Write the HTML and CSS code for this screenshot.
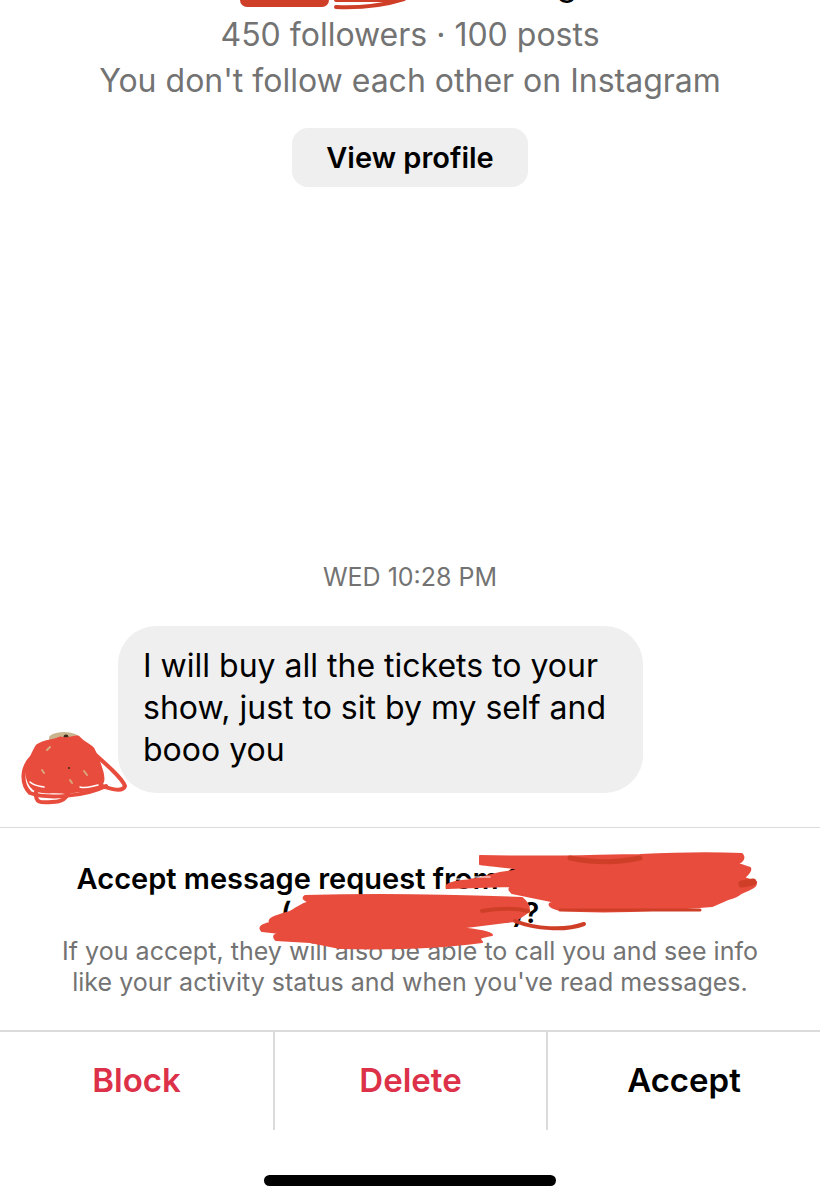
FILE: index.html
```html
<!DOCTYPE html>
<html lang="en">
<head>
    <meta charset="UTF-8">
    <meta name="viewport" content="width=device-width, initial-scale=1.0">
    <title>Message request</title>
    <link rel="stylesheet" href="styles.css">
</head>
<body>
    <div class="screen">
        <!-- profile summary, name line is cut off by the top edge -->
        <div class="profile">
            <div class="nameline">on Instagram</div>
            <div class="meta stats">450 followers · 100 posts</div>
            <div class="meta">You don't follow each other on Instagram</div>
            <button class="viewbtn">View profile</button>
        </div>

        <div class="thread">
            <div class="time">WED 10:28 PM</div>
            <div class="msgrow">
                <div class="bubble">I will buy all the tickets to your show, just to sit by my self and booo you</div>
            </div>
        </div>

        <div class="request">
            <div class="reqtitle">Accept message request from Someone Names<br>(someone_name)?</div>
            <div class="reqtext">If you accept, they will also be able to call you and see info like your activity status and when you've read messages.</div>
        </div>

        <div class="actions">
            <div class="action danger">Block</div>
            <div class="action danger">Delete</div>
            <div class="action">Accept</div>
        </div>

        <div class="homearea"><div class="homebar"></div></div>

        <!-- marker scribbles over name and avatar -->
        <svg class="scribble" viewBox="0 0 820 1200" width="820" height="1200" fill="none" stroke-linecap="round" stroke-linejoin="round">
            <path class="dark" stroke-width="14" d="M247 0H322"/>
            <path class="dark" stroke-width="4" d="M336 7C360 8 385 5 404 -1M336 0H395"/>

            <!-- avatar -->
            <ellipse class="photo" cx="64" cy="738" rx="15" ry="6"/>
            <circle class="photodark" cx="66" cy="737" r="2.5"/>
            <g class="marks">
                <path stroke-width="4" d="M90 750C106 764 122 778 125 786C123 792 112 790 100 785"/>
                <path stroke-width="4" d="M36 792C35 803 40 803 52 802C62 802 67 798 68 792"/>
                <path stroke-width="4" d="M32 757C21 768 21 784 30 793C46 799 84 797 106 786"/>
                <path class="solid" stroke-width="3" d="M37 746C44 740 52 742 60 738C68 741 74 736 78 737C84 744 90 745 93 749C98 758 100 766 102 772C104 780 103 784 98 788C88 791 74 790 68 793C56 790 44 794 36 790C28 786 26 774 27 768C30 760 33 752 37 746Z"/>
            </g>
            <path class="fleck" stroke-width="2" d="M47 750L50 747M84 771L87 775M42 770L44 773M70 780L72 783"/>
            <path class="gap" stroke-width="1.5" d="M30 782C34 786 40 786 44 787M80 787C86 789 92 786 98 785"/>
            <circle class="photodark" cx="69" cy="768" r="1"/>

            <!-- name, line one -->
            <g class="marks">
                <path class="solid" stroke-width="2" d="M480 856C560 858 600 855 640 855C680 853 720 853 742 854C745 858 743 861 738 864L750 868C752 872 746 875 744 878L756 882C757 887 750 889 741 893C738 896 736 897 728 899L712 906C660 911 600 913 560 910C548 907 546 903 556 902L512 893C507 889 510 887 514 886L447 888C445 884 450 882 476 879L500 873L520 870C510 866 490 866 480 864Z"/>
            </g>
            <path class="gap" stroke-width="1.2" d="M456 879H468M474 877H490"/>
            <path class="dark" stroke-width="5" d="M570 858C600 864 620 862 640 858"/>
            <path class="dark" stroke-width="7" d="M742 884L753 882"/>
            <path class="dark" stroke-width="3" d="M560 910H700"/>

            <!-- name, line two -->
            <g class="marks">
                <path class="solid" stroke-width="2" d="M305 896C370 894 450 895 522 898C528 903 530 908 528 912L515 921L458 928C480 930 490 932 492 935C480 937 478 938 482 942C460 945 420 950 340 948C330 946 320 944 310 942L276 940C272 936 275 934 280 933L262 931C258 927 262 925 270 923C268 919 272 917 290 912C298 908 300 904 310 902C304 900 302 898 305 896Z"/>
            </g>
            <path class="dark" stroke-width="4" d="M482 911C500 908 515 908 528 911"/>
            <path class="dark" stroke-width="4" d="M515 921C535 929 565 931 584 924"/>
        </svg>
    </div>
</body>
</html>
```

FILE: styles.css
```css
* {box-sizing: border-box;}
html, body {margin: 0; padding: 0; background: #fff;}
body {font-family: "Inter", "Liberation Sans", sans-serif; color: #000;}

.screen {position: relative; width: 820px; height: 1200px; overflow: hidden; display: flex; flex-direction: column;}

.profile {height: 187px; display: flex; flex-direction: column; align-items: center;}
.nameline {margin-top: -32px; height: 38px; font-size: 33px; line-height: 32px; padding-left: 250px; color: #000;}
.meta {font-size: 32px; line-height: 46px; color: #737373;}
.stats {margin-top: 6px;}
.viewbtn {margin-top: 24px; width: 236px; height: 59px; border: 0; border-radius: 16px; background: #efefef; font-family: inherit; font-size: 29px; font-weight: 600; color: #000;}

.thread {flex: 1; display: flex; flex-direction: column; justify-content: flex-end; padding-bottom: 34px;}
.time {text-align: center; font-size: 25px; line-height: 30px; color: #737373; margin-bottom: 34px;}
.msgrow {padding-left: 118px;}
.bubble {width: 525px; height: 167px; padding: 19px 25px; border-radius: 38px; background: #efefef; font-size: 32px; line-height: 42px;}

.request {height: 203px; border-top: 1px solid #dbdbdb; padding-top: 34px; text-align: center;}
.reqtitle {font-size: 29px; line-height: 34px; font-weight: 600; height: 74px; padding: 0 50px;}
.reqtext {font-size: 25px; letter-spacing: 0.03px; line-height: 31px; color: #737373; padding: 0 50px;}

.actions {height: 100px; border-top: 2px solid #dbdbdb; display: grid; grid-template-columns: 273px 273px 274px;}
.action {display: flex; align-items: center; justify-content: center; padding-bottom: 2px; font-size: 33px; font-weight: 600; border-left: 2px solid #dbdbdb;}
.action:first-child {border-left: 0;}
.danger {color: #dc3148;}

.homearea {height: 70px; display: flex; justify-content: center; padding-top: 45px;}
.homebar {width: 292px; height: 11px; border-radius: 6px; background: #000;}

.scribble {position: absolute; left: 0; top: 0;}
.marks {stroke: #e84c3d;}
.solid {fill: #e84c3d;}
.scribble .dark {stroke: #cf3f28;}
.gap {stroke: #fff;}
.photo {fill: #c9b48e;}
.photodark {fill: #3a2a1c;}
.fleck {stroke: #d9a77c;}
```
